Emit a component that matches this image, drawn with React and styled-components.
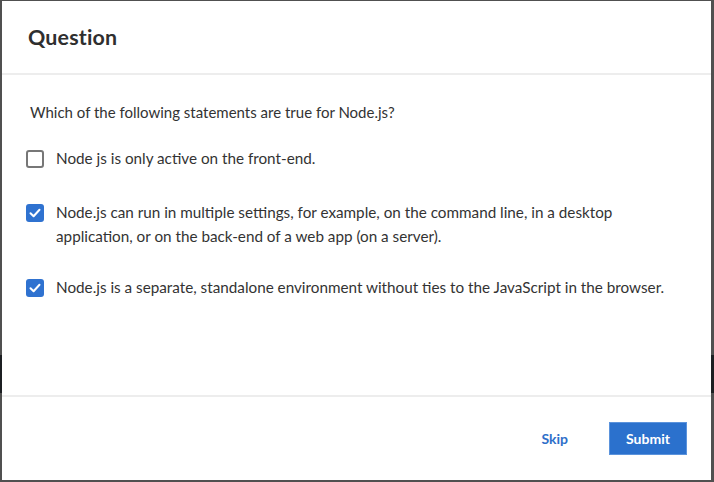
import styled, { createGlobalStyle } from "styled-components";

const GlobalStyle = createGlobalStyle`
  html, body {
    margin: 0;
    padding: 0;
    height: 482px;
    overflow: hidden;
  }
  body {
    background: linear-gradient(
      to bottom,
      #505050 355px,
      #1c1f22 355px,
      #1c1f22 393px,
      #505050 393px
    );
    font-family: "Source Sans Pro", Lato, "Liberation Sans", sans-serif;
  }
`;

const Dialog = styled.div`
  margin: 1px 3px 2px 2px;
  height: 479px;
  background: #fff;
  display: flex;
  flex-direction: column;
  color: #333;
`;

const Header = styled.header`
  height: 72px;
  flex-shrink: 0;
  display: flex;
  align-items: center;
  padding: 0 26px;
  border-bottom: 2px solid #ededed;
`;

const Title = styled.h2`
  margin: 0;
  font-size: 21.4px;
  font-weight: 700;
  color: #2f2f2f;
  letter-spacing: 0.2px;
`;

const Body = styled.div`
  flex: 1;
  padding: 25px 24px 0 24px;
`;

const Prompt = styled.p`
  margin: 0 0 0 4px;
  font-size: 15px;
  line-height: 24px;
`;

const Option = styled.label`
  display: flex;
  align-items: flex-start;
  gap: 12px;
  margin-top: ${(p) => p.$space}px;
  font-size: 15.25px;
  line-height: 24px;
  cursor: pointer;
`;

const Box = styled.span`
  flex-shrink: 0;
  width: 18px;
  height: 18px;
  margin-top: 4px;
  box-sizing: border-box;
  border-radius: 3px;
  display: flex;
  align-items: center;
  justify-content: center;
  background: ${(p) => (p.$checked ? "#2f72d0" : "#fff")};
  border: ${(p) => (p.$checked ? "none" : "2px solid #777")};
`;

const OptionText = styled.span`
  max-width: 610px;
`;

const Footer = styled.footer`
  height: 83px;
  flex-shrink: 0;
  border-top: 2px solid #ededed;
  display: flex;
  align-items: center;
  justify-content: flex-end;
  gap: 41px;
  padding: 0 24px 0 0;
`;

const SkipButton = styled.button`
  background: none;
  border: none;
  padding: 0;
  font-family: inherit;
  font-size: 14px;
  font-weight: 700;
  color: #2e6fc9;
  cursor: pointer;
`;

const SubmitButton = styled.button`
  width: 78px;
  height: 33px;
  background: #2b71cd;
  border: 1px solid #5b93dc;
  color: #fff;
  font-family: inherit;
  font-size: 14px;
  font-weight: 700;
  cursor: pointer;
`;

const Check = () => (
  <svg width="14" height="14" viewBox="0 0 14 14">
    <path
      d="M2.5 7.2 L5.6 10.2 L11.5 3.8"
      fill="none"
      stroke="#fff"
      strokeWidth="2"
      strokeLinecap="round"
      strokeLinejoin="round"
    />
  </svg>
);

const options = [
  { text: "Node js is only active on the front-end.", checked: false, space: 22 },
  {
    text: "Node.js can run in multiple settings, for example, on the command line, in a desktop application, or on the back-end of a web app (on a server).",
    checked: true,
    space: 30,
  },
  {
    text: "Node.js is a separate, standalone environment without ties to the JavaScript in the browser.",
    checked: true,
    space: 27,
  },
];

export default function App() {
  return (
    <>
      <GlobalStyle />
      <Dialog>
        <Header>
          <Title>Question</Title>
        </Header>
        <Body>
          <Prompt>Which of the following statements are true for Node.js?</Prompt>
          {options.map((o) => (
            <Option key={o.text} $space={o.space}>
              <Box $checked={o.checked}>{o.checked && <Check />}</Box>
              <OptionText>{o.text}</OptionText>
            </Option>
          ))}
        </Body>
        <Footer>
          <SkipButton>Skip</SkipButton>
          <SubmitButton>Submit</SubmitButton>
        </Footer>
      </Dialog>
    </>
  );
}
